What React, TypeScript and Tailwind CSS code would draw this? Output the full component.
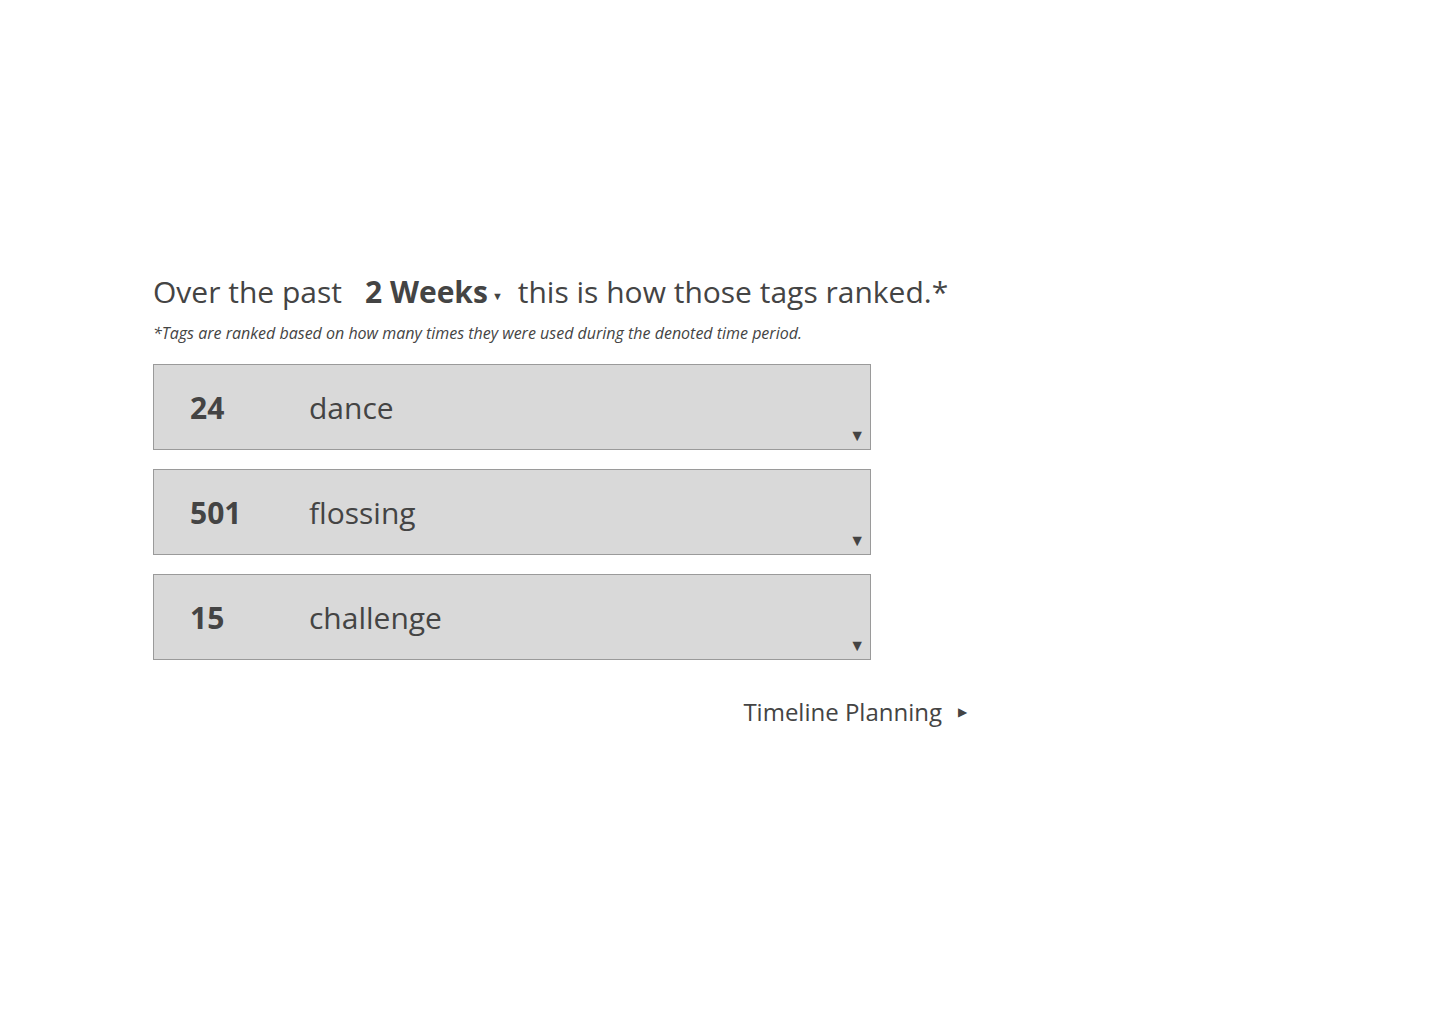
import React, { useState } from "react";

type TagRank = {
  count: number;
  tag: string;
};

const tags: TagRank[] = [
  { count: 24, tag: "dance" },
  { count: 501, tag: "flossing" },
  { count: 15, tag: "challenge" },
];

export default function App() {
  const [period] = useState("2 Weeks");

  return (
    <div
      className="min-h-[1024px] w-[1440px] bg-white text-[#444444]"
      style={{ fontFamily: '"Open Sans", "Liberation Sans", sans-serif' }}
    >
      <div className="pl-[153px] pt-[272px]">
        {/* Heading */}
        <h1 className="flex items-baseline text-[30px] leading-[40px] font-normal">
          <span>Over the past</span>
          <button className="ml-[23px] flex items-baseline font-bold">
            {period}
            <span className="relative -top-[3px] ml-[4px] text-[11px] font-normal">
              ▼
            </span>
          </button>
          <span className="ml-[15px]">this is how those tags ranked.*</span>
        </h1>
        <p className="mt-[3px] text-[16px] italic leading-[22px]">
          *Tags are ranked based on how many times they were used during the
          denoted time period.
        </p>

        {/* Tag rows */}
        <div className="mt-[20px] flex w-[718px] flex-col gap-[19px]">
          {tags.map((t) => (
            <div
              key={t.tag}
              className="relative flex h-[86px] items-center border border-[#9a9a9a] bg-[#d9d9d9] pl-[36px]"
            >
              <span className="w-[119px] text-[30px] font-bold">{t.count}</span>
              <span className="text-[30px]">{t.tag}</span>
              <span className="absolute right-[5px] bottom-[6px] text-[16px] leading-none">
                ▼
              </span>
            </div>
          ))}
        </div>

        {/* Next link */}
        <div className="mt-[34px] flex w-[814px] items-center justify-end">
          <span className="text-[24px] leading-[36px]">Timeline Planning</span>
          <span className="ml-[16px] text-[12px]">▶</span>
        </div>
      </div>
    </div>
  );
}
